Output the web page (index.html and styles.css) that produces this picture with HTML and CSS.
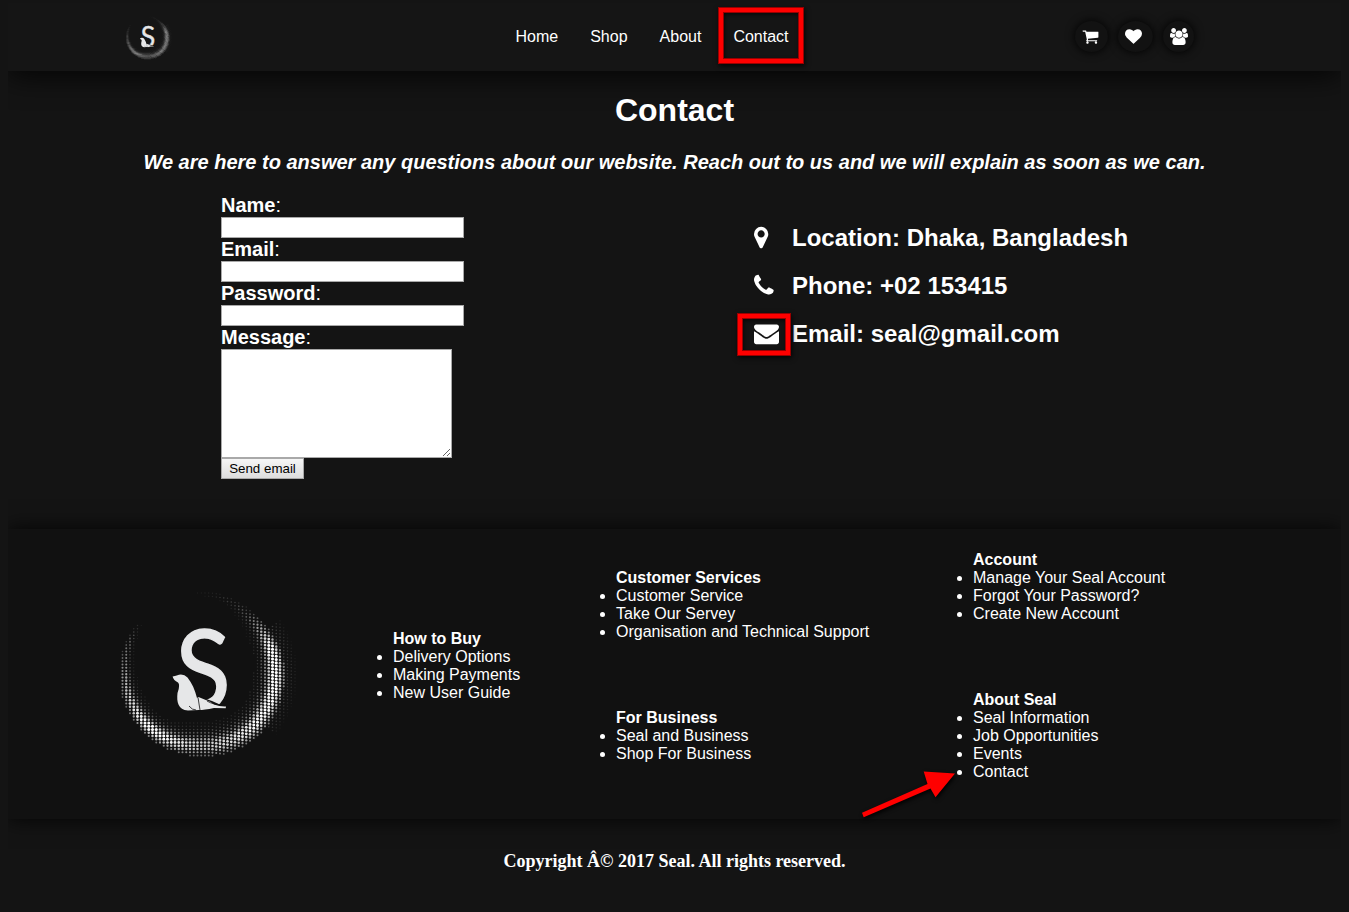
FILE: index.html
```html
<!DOCTYPE html>
<html lang="en">
<head>
<meta charset="utf-8">
<title>Seal - Contact</title>
<link rel="stylesheet" href="styles.css">
</head>
<body>
<header class="topbar">
  <svg class="logo-small" viewBox="0 0 210 190"><use href="#seal-logo"/></svg>
  <nav class="nav">
    <a>Home</a><a>Shop</a><a>About</a><a class="marked">Contact<span class="box nav-box"></span></a>
  </nav>
  <div class="actions">
    <span class="round cart"><svg width="17" height="17" viewBox="0 0 1792 1792"><path d="M704 1536q0 52-38 90t-90 38-90-38-38-90 38-90 90-38 90 38 38 90zm896 0q0 52-38 90t-90 38-90-38-38-90 38-90 90-38 90 38 38 90zm128-1088v512q0 24-16.500 42.500t-40.500 21.500l-1044 122q13 60 13 70 0 16-24 64h920q26 0 45 19t19 45-19 45-45 19h-1024q-26 0-45-19t-19-45q0-11 8-31.500t16-36 21.500-40 15.500-29.500l-177-823h-204q-26 0-45-19t-19-45 19-45 45-19h256q16 0 28.500 6.500t19.500 15.500 13 24.500 8 26 5.500 29.500 4.500 26h1201q26 0 45 19t19 45z"/></svg></span>
    <span class="round heart"><svg width="17" height="17" viewBox="0 0 1792 1792"><path d="M896 1664q-26 0-44-18l-624-602q-10-8-27.500-26t-55.500-65.500-68-97.500-53.500-121-23.500-138q0-220 127-344t351-124q62 0 126.500 21.500t120 58 95.500 68.500 76 68q36-36 76-68t95.500-68.500 120-58 126.500-21.500q224 0 351 124t127 344q0 221-229 450l-623 600q-18 18-44 18z"/></svg></span>
    <span class="round users"><svg width="18" height="17" viewBox="0 0 1920 1792"><path d="M593 896q-162 5-265 128h-134q-82 0-138-40.500t-56-118.500q0-353 124-353 6 0 43.500 21t97.500 42.500 119 21.500q67 0 133-23-5 37-5 66 0 139 81 256zm1071 637q0 120-73 189.500t-194 69.500h-874q-121 0-194-69.500t-73-189.500q0-53 3.500-103.500t14-109 26.500-108.500 43-97.500 62-81 85.500-53.500 111.500-20q10 0 43 21.500t73 48 107 48 135 21.500 135-21.500 107-48 73-48 43-21.500q61 0 111.500 20t85.500 53.500 62 81 43 97.500 26.500 108.500 14 109 3.500 103.500zm-1024-1277q0 106-75 181t-181 75-181-75-75-181 75-181 181-75 181 75 75 181zm704 384q0 159-112.500 271.500t-271.500 112.500-271.500-112.500-112.500-271.500 112.500-271.500 271.500-112.500 271.500 112.500 112.500 271.500zm576 225q0 78-56 118.500t-138 40.500h-134q-103-123-265-128 81-117 81-256 0-29-5-66 66 23 133 23 59 0 119-21.500t97.500-42.500 43.500-21q124 0 124 353zm-128-609q0 106-75 181t-181 75-181-75-75-181 75-181 181-75 181 75 75 181z"/></svg></span>
  </div>
</header>

<main class="main">
  <h1 class="title">Contact</h1>
  <p class="intro">We are here to answer any questions about our website. Reach out to us and we will explain as soon as we can.</p>
  <div class="columns">
    <form class="form">
      <label><b>Name</b>:</label><input class="field" type="text">
      <label><b>Email</b>:</label><input class="field" type="text">
      <label><b>Password</b>:</label><input class="field" type="password">
      <label><b>Message</b>:</label><textarea class="message"></textarea>
      <button class="send" type="button">Send email</button>
    </form>
    <div class="info">
      <div class="info-row"><span class="info-icon"><svg width="25" height="25" viewBox="384 0 1792 1792"><path d="M1152 640q0-106-75-181t-181-75-181 75-75 181 75 181 181 75 181-75 75-181zm256 0q0 109-33 179l-364 774q-16 33-47.500 52t-67.500 19-67.500-19-46.500-52l-365-774q-33-70-33-179 0-212 150-362t362-150 362 150 150 362z"/></svg></span>Location: Dhaka, Bangladesh</div>
      <div class="info-row"><span class="info-icon"><svg width="25" height="25" viewBox="192 0 1792 1792"><path d="M1600 1240q0 27-10 70.500t-21 68.500q-21 50-122 106-94 51-186 51-27 0-53-3.500t-57.500-12.500-47-14.500-55.500-20.500-49-18q-98-35-175-83-127-79-264-216t-216-264q-48-77-83-175-3-9-18-49t-20.500-55.500-14.500-47-12.500-57.500-3.500-53q0-92 51-186 56-101 106-122 25-11 68.500-21t70.500-10q14 0 21 3 18 6 53 76 11 19 30 54t35 63.500 31 53.500q3 4 17.500 25t21.500 35.500 7 28.500q0 20-28.500 50t-62 55-62 53-28.500 46q0 9 5 22.500t8.500 20.500 14 24 11.500 19q76 137 174 235t235 174q2 1 19 11.500t24 14 20.500 8.500 22.500 5q18 0 46-28.500t53-62 55-62 50-28.500q14 0 28.500 7t35.500 21.500 25 17.500q25 15 53.500 31t63.500 35 54 30q70 35 76 53 3 7 3 21z"/></svg></span>Phone: +02 153415</div>
      <div class="info-row"><span class="info-icon marked"><svg width="25" height="25" viewBox="0 0 1792 1792"><path d="M1792 710v794q0 66-47 113t-113 47h-1472q-66 0-113-47t-47-113v-794q44 49 101 87 362 246 497 345 57 42 92.500 65.500t94.500 48 110 24.500h2q51 0 110-24.500t94.500-48 92.500-65.500q170-123 498-345 57-39 100-87zm0-294q0 79-49 151t-122 123q-376 261-468 325-10 7-42.500 31t-54 38.500-52 32.500-57.500 27-50 9h-2q-23 0-50-9t-57.500-27-52-32.500-54-38.500-42.500-31q-91-64-262-182.500t-205-142.500q-62-42-117-115.500t-55-136.500q0-78 41.500-130t118.500-52h1472q65 0 112.500 47t47.500 113z"/></svg><span class="box mail-box"></span></span>Email: seal@gmail.com</div>
    </div>
  </div>
</main>

<footer class="footer">
  <svg class="logo-big" viewBox="0 0 210 190">
    <g id="seal-logo">
      <g id="ring"></g>
      <text class="logo-letter" transform="translate(75.300 128.500) scale(.93 1)">S</text>
      <path class="logo-gap" d="M71 93L80 92L89 95L97 110L99 116L106 119L112 121L122 125.500V133H84L74 125V104Z"/>
      <path class="logo-seal" d="M72.600 96.600Q76 95.500 79 94.700Q84 93.800 87.500 97.500C92 103 95 110 97 118L98.500 117L110 121.800L114 124.500Q120 126.800 126 126.500L125.700 128.300L114 128Q104 130 99 130L88 130.600C78 129.500 76.500 122 77.500 113Q80.500 105 78 102.500Q73.500 100.500 72.600 96.600Z"/>
      <path class="logo-line" d="M98 117.500L100 130M89 126Q92 130 96 130M107 121Q113 125 126 125"/>
    </g>
  </svg>
  <div class="links buy">
    <ul class="list"><b>How to Buy</b><li>Delivery Options</li><li>Making Payments</li><li>New User Guide</li></ul>
  </div>
  <div class="links service">
    <ul class="list"><b>Customer Services</b><li>Customer Service</li><li>Take Our Servey</li><li>Organisation and Technical Support</li></ul>
    <ul class="list"><b>For Business</b><li>Seal and Business</li><li>Shop For Business</li></ul>
  </div>
  <div class="links account">
    <ul class="list"><b>Account</b><li>Manage Your Seal Account</li><li>Forgot Your Password?</li><li>Create New Account</li></ul>
    <ul class="list"><b>About Seal</b><li>Seal Information</li><li>Job Opportunities</li><li>Events</li><li class="marked">Contact<svg class="arrow" width="100" height="52" viewBox="0 0 100 52"><path d="M3.700 47.200L2 42.700L67.500 13.900L63.700 1.500L95 3.500L75.500 27.300L70.500 18.500Z"/></svg></li></ul>
  </div>
</footer>
<p class="copyright">Copyright Â© 2017 Seal. All rights reserved.</p>
<script src="logo.js"></script>
</body>
</html>
```
FILE: styles.css
```css
body { margin: 3px 8px 0; background: #141414; color: #fff; font: 16px/18px "Liberation Sans", Arial, sans-serif; }
.marked { position: relative; }
.box { position: absolute; box-sizing: border-box; border: 5px solid #f00; outline: 1px solid #900; outline-offset: -1px; box-shadow: 1px 2px 5px rgba(0,0,0,.8), inset 0 0 0 1px #900, inset 1px 2px 5px rgba(0,0,0,.8); }
.nav-box { left: -15px; top: -21px; width: 86px; height: 57px; }
.mail-box { left: -17px; top: -7px; width: 54px; height: 43px; }

.topbar { display: flex; height: 68px; background: #151515; box-shadow: 0 4px 30px 0 rgba(0,0,0,.85); }
.logo-small { width: 55px; height: 49.800px; margin: 9.500px 0 0 112.500px; }
.logo-letter { font: 400 110px Lato, sans-serif; fill: #e6e7e8; stroke: #e6e7e8; stroke-width: 1.400; }
.logo-gap { fill: #111; }
.logo-seal { fill: #e6e7e8; }
.logo-line { fill: none; stroke: #111; stroke-width: .8; }
.nav { display: flex; gap: 32px; width: 559.500px; margin-left: 340px; padding-top: 25px; }
.nav a { height: 18px; }
.actions { display: flex; gap: 10px; padding-top: 18px; }
.round { display: flex; align-items: center; justify-content: center; height: 31px; border-radius: 50%; background: #121212; box-shadow: 0 0 10px #000; }
.round svg, .info-icon svg { fill: #fff; }
.cart { width: 33px; padding-right: 3px; box-sizing: border-box; }
.heart { width: 35px; padding-right: 4px; box-sizing: border-box; }
.users { width: 31px; }

.main { height: 458px; }
.title { margin: 0; padding-top: 21px; font-size: 32px; line-height: 37px; text-align: center; }
.intro { margin: 0; padding-top: 21px; font-size: 20px; line-height: 24px; font-weight: bold; font-style: italic; text-align: center; white-space: nowrap; }
.columns { display: flex; padding-top: 20px; }
.form { display: flex; flex-direction: column; align-items: flex-start; width: 531px; margin-left: 213px; font-size: 20px; line-height: 23px; }
.field { box-sizing: border-box; width: 243px; height: 21px; border: 1px solid #a9a9a9; background: #fff; }
.message { box-sizing: border-box; width: 231px; height: 109px; margin: 0; border: 1px solid #a9a9a9; background: #fff; }
.send { width: 83px; height: 21px; padding: 0; border: 1px solid #a9a9a9; border-radius: 0; background: linear-gradient(#f6f6f6, #ddd); color: #000; font: 13.333px "Liberation Sans", Arial, sans-serif; }
.info { display: flex; flex-direction: column; gap: 21px; padding-top: 30px; font-size: 24px; font-weight: bold; line-height: 27px; }
.info-row { display: flex; padding-left: 2px; }
.info-icon { width: 38px; height: 27px; }
.info-icon svg { display: block; margin: 1px 0 0 .3px; }

.footer { display: grid; grid-template-columns: 345px 223px 357px 1fr; height: 290px; background: #111; box-shadow: 0 0 20px 0 rgba(0,0,0,.85); }
.logo-big { width: 210px; height: 190px; margin: 51px 0 0 92px; }
.links { display: flex; flex-direction: column; gap: 68px; }
.buy { padding-top: 101px; }
.service { padding-top: 40px; }
.account { padding-top: 22px; }
.list { margin: 0; padding-left: 40px; }
.arrow { position: absolute; left: -113px; top: 7px; fill: #f00; filter: drop-shadow(1px 2px 2px #000); }
.copyright { margin: 0; padding-top: 32px; text-align: center; font: bold 18px/20px "Liberation Serif", "Times New Roman", serif; }
```
FILE: logo.js
```js
// Halftone ring of the logo: dot size follows a crescent-shaped intensity.
(function () {
  var ring = document.getElementById('ring');
  var ns = 'http://www.w3.org/2000/svg';
  // [angle in degrees clockwise from east, inner radius, outer radius, strength]
  var stops = [
    [0, 50, 82, 1], [45, 50, 83, 0.9], [90, 46, 83, 0.7], [135, 59, 83, 1],
    [170, 64, 84, 0.65], [205, 72, 84, 0.3], [222, 74, 84, 0], [255, 75, 83, 0],
    [280, 74, 82, 0.12], [305, 60, 80, 0.25], [325, 56, 80, 0.65], [340, 54, 81, 1], [360, 50, 82, 1]
  ];
  function at(a) {
    for (var i = 1; i < stops.length; i++) {
      if (a <= stops[i][0]) {
        var p = stops[i - 1], q = stops[i], t = (a - p[0]) / (q[0] - p[0]);
        return [1, 2, 3].map(function (k) { return p[k] + (q[k] - p[k]) * t; });
      }
    }
  }
  function dot(x, y, r, o) {
    var c = document.createElementNS(ns, 'circle');
    c.setAttribute('cx', x.toFixed(2));
    c.setAttribute('cy', y.toFixed(2));
    c.setAttribute('r', r.toFixed(2));
    c.setAttribute('fill', '#fff');
    c.setAttribute('opacity', o.toFixed(2));
    ring.appendChild(c);
  }
  for (var row = 0; row < 58; row++) {
    for (var col = 0; col < 56; col++) {
      var x = col * 3.75, y = row * 3.25 + Math.max(0, x - 110) * 0.12;
      var dx = x - 103, dy = y - 94, d = Math.hypot(dx, dy);
      var a = (Math.atan2(dy, dx) * 180 / Math.PI + 360) % 360;
      var s = at(a);
      if (d > s[0] && d < s[1]) {
        var t = (d - s[0]) / (s[1] - s[0]);
        var v = s[2] * Math.min(1, 0.1 + t * t * 2.6, (1 - t) * 2.5 + 0.4);
        if (v > 0.04) dot(x, y, 0.65 + v * 0.9, Math.min(1, v * 1.1));
      } else if (d >= s[1] && d < 96 && (a < 40 || a > 325)) {
        dot(x, y, 0.8, 0.2 * (96 - d) / 12);
      }
    }
  }
})();
```
